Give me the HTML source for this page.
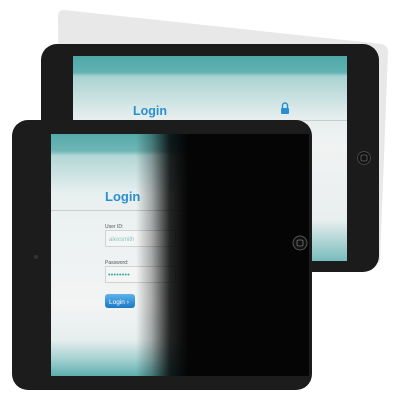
<!DOCTYPE html>
<html><head><style>
html,body{margin:0;padding:0;background:#fff;width:400px;height:400px;overflow:hidden}
svg{display:block}
text{font-family:"Liberation Sans",sans-serif}
</style></head><body>
<svg width="400" height="400" viewBox="0 0 400 400">
<defs>
<linearGradient id="bs" x1="0" y1="0" x2="0" y2="1">
<stop offset="0" stop-color="#4fa7a8"/><stop offset="0.08" stop-color="#62b2b2"/><stop offset="0.1" stop-color="#a9d3d2"/><stop offset="0.3" stop-color="#e6eeee"/><stop offset="0.45" stop-color="#f1f3f3"/><stop offset="0.8" stop-color="#e9eeee"/><stop offset="1" stop-color="#78bcbd"/>
</linearGradient>
<linearGradient id="fs" x1="0" y1="0" x2="0" y2="1">
<stop offset="0" stop-color="#56aaab"/><stop offset="0.07" stop-color="#6fb6b6"/><stop offset="0.09" stop-color="#b3d7d6"/><stop offset="0.25" stop-color="#e9f0f0"/><stop offset="0.7" stop-color="#f3f4f4"/><stop offset="0.85" stop-color="#e6eeee"/><stop offset="0.93" stop-color="#a5d1d1"/><stop offset="1" stop-color="#5eaeae"/>
</linearGradient>
<linearGradient id="dk" x1="0" y1="0" x2="1" y2="0">
<stop offset="0" stop-color="#000" stop-opacity="0"/><stop offset="0.3" stop-color="#000" stop-opacity="0.3"/><stop offset="0.65" stop-color="#000" stop-opacity="0.85"/><stop offset="1" stop-color="#050505" stop-opacity="1"/>
</linearGradient>
<linearGradient id="btn" x1="0" y1="0" x2="0" y2="1"><stop offset="0" stop-color="#5fb4ea"/><stop offset="1" stop-color="#1a78c4"/></linearGradient>
</defs>
<path d="M64 10 L382 44 Q388 46 388 52 L380 262 L60 262 L58 16 Q58 10 64 10 Z" fill="#e8e8e8"/>
<rect x="41" y="44" width="338" height="228" rx="16" fill="#1b1b1c"/>
<rect x="73" y="56" width="274" height="205" fill="url(#bs)"/>
<text x="133" y="115" font-size="12.5" font-weight="bold" fill="#2a8fd0">Login</text>
<rect x="281" y="108" width="8" height="6" rx="1" fill="#2a8fd0"/>
<path d="M282.5 108 v-2.5 a2.5 2.5 0 0 1 5 0 v2.5" stroke="#2a8fd0" stroke-width="1.4" fill="none"/>
<line x1="73" y1="120.5" x2="347" y2="120.5" stroke="#c8cccc"/>
<circle cx="364" cy="158" r="6.5" fill="#111" stroke="#444" stroke-width="1"/>
<rect x="361" y="155" width="6" height="6" rx="1.5" fill="none" stroke="#666" stroke-width="0.8"/>
<rect x="12" y="120" width="300" height="270" rx="16" fill="#1c1c1d"/>
<rect x="51" y="134" width="258" height="242" fill="url(#fs)"/>
<text x="105" y="201" font-size="13" font-weight="bold" fill="#2a8fd0">Login</text>
<line x1="51" y1="210.5" x2="309" y2="210.5" stroke="#c8cccc"/>
<text x="105" y="228" font-size="5" fill="#555">User ID:</text>
<rect x="105.5" y="230.5" width="70" height="16" fill="#f4f6f6" stroke="#d0d4d4"/>
<text x="109" y="241" font-size="6" fill="#8cc4c0">alexsmith</text>
<text x="105" y="264" font-size="5" fill="#555">Password:</text>
<rect x="105.5" y="266.5" width="70" height="16" fill="#f4f6f6" stroke="#d0d4d4"/>
<text x="108" y="277" font-size="7" fill="#3ea39c" letter-spacing="0.3">••••••••</text>
<rect x="105" y="294" width="30" height="14" rx="3" fill="url(#btn)"/>
<text x="109" y="304" font-size="6.5" fill="#fff">Login ›</text>
<rect x="136" y="134" width="52" height="242" fill="url(#dk)"/>
<rect x="188" y="134" width="121" height="242" fill="#050505"/>
<circle cx="300" cy="243" r="7" fill="#111" stroke="#555" stroke-width="1"/>
<rect x="297" y="240" width="6" height="6" rx="1.5" fill="none" stroke="#777" stroke-width="0.8"/>
<circle cx="36" cy="257" r="2" fill="#333"/>
</svg>
</body></html>
